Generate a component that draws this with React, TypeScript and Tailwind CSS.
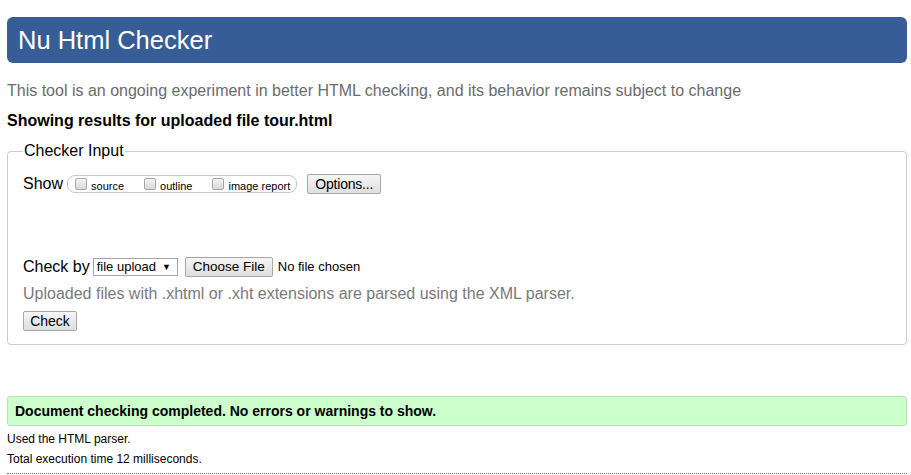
export default function App() {
  return (
    <div className="min-h-screen bg-white pl-[7px] pr-[4px] pt-[17px] text-black font-['Liberation_Sans',Arial,sans-serif]">
      {/* Header */}
      <h1 className="h-[46px] rounded-[6px] bg-[#365d95] pl-[11px] text-[25.5px] leading-[46px] text-white">
        Nu Html Checker
      </h1>

      <p className="mt-[18px] text-[16px] leading-[20px] text-[#6b6b6b]">
        This tool is an ongoing experiment in better HTML checking, and its behavior remains subject to change
      </p>
      <p className="mt-[10px] text-[16px] font-bold leading-[20px]">
        Showing results for uploaded file tour.html
      </p>

      {/* Checker input */}
      <fieldset className="mt-[11px] rounded-[4px] border border-[#cccccc] px-[15px] pb-[11px] pt-0">
        <legend className="px-[1px] text-[16px] leading-[18px]">Checker Input</legend>

        <div className="mt-[12px] flex items-center">
          <span className="text-[16px]">Show</span>
          <div className="ml-[4px] flex h-[18px] items-center rounded-[8px] border border-[#c8c8c8] pl-[7px] pr-[6px]">
            {['source', 'outline', 'image report'].map((label, i) => (
              <label key={label} className={`flex items-center ${i > 0 ? 'ml-[20px]' : ''}`}>
                <span className="h-[12px] w-[12px] rounded-[2px] border border-[#a8a8a8] bg-gradient-to-b from-[#f4f4f4] to-[#d8d8d8]" />
                <span className="ml-[4px] text-[11px] leading-[12px] pt-[4px]">{label}</span>
              </label>
            ))}
          </div>
          <button className="ml-[10px] h-[20px] rounded-[2px] border border-[#a6a6a6] bg-gradient-to-b from-[#f6f6f6] to-[#dedede] px-[7px] text-[14px] leading-[18px] tracking-[-0.2px]">
            Options...
          </button>
        </div>

        <div className="mt-[59px] flex items-center">
          <span className="text-[16px]">Check by</span>
          <span className="ml-[3px] flex h-[18px] w-[85px] items-center border border-[#a6a6a6] bg-white pl-[3px] text-[13px] leading-[16px]">
            file upload <span className="ml-[6px] text-[9px]">▼</span>
          </span>
          <button className="ml-[7px] h-[20px] rounded-[2px] border border-[#a6a6a6] bg-gradient-to-b from-[#f6f6f6] to-[#dedede] px-[7px] text-[13.5px] leading-[18px]">
            Choose File
          </button>
          <span className="ml-[5px] text-[13px]">No file chosen</span>
        </div>

        <p className="mt-[5px] text-[16px] leading-[20px] text-[#7a7a7a]">
          Uploaded files with .xhtml or .xht extensions are parsed using the XML parser.
        </p>

        <button className="mt-[7px] h-[20px] w-[54px] rounded-[2px] border border-[#a6a6a6] bg-gradient-to-b from-[#f6f6f6] to-[#dedede] text-[14px] leading-[18px]">
          Check
        </button>
      </fieldset>

      {/* Result */}
      <div className="mt-[51px] h-[30px] rounded-[3px] border border-[#bcdcbc] bg-[#ccffcc] pl-[7px] text-[14px] font-bold leading-[28px]">
        Document checking completed. No errors or warnings to show.
      </div>

      <p className="mt-[5px] text-[12px] leading-[16px]">Used the HTML parser.</p>
      <p className="mt-[4px] text-[12px] leading-[16px]">Total execution time 12 milliseconds.</p>
      <div className="mt-[6px] border-b border-dotted border-[#777777]" />
    </div>
  );
}
